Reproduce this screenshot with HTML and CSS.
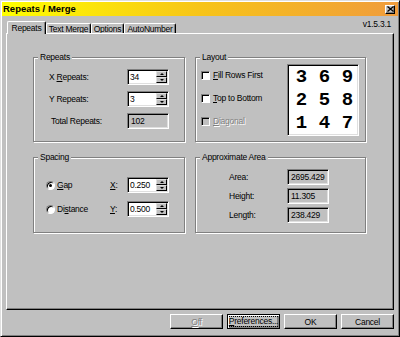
FILE: index.html
```html
<!DOCTYPE html>
<html lang="en">
<head>
  <meta charset="UTF-8">
  <title>Repeats / Merge</title>
  <link rel="stylesheet" href="styles.css">
</head>
<body>

  <div class="window">

    <!-- TITLE BAR -->
    <div class="titlebar">
      <span class="title">Repeats / Merge</span>
      <span class="close-btn">
        <svg width="7" height="6" viewBox="0 0 7 6"><path d="M0.5 0.5L6.5 5.5M6.5 0.5L0.5 5.5" stroke="#000" stroke-width="1.3"/></svg>
      </span>
    </div>

    <div class="body">

      <!-- TABS -->
      <div class="tab-row">
        <div class="tabs">
          <div class="tab active tab-repeats">Repeats</div>
          <div class="tab tab-merge">Text Merge</div>
          <div class="tab tab-options">Options</div>
          <div class="tab tab-auto">AutoNumber</div>
        </div>
        <div class="version">v1.5.3.1</div>
      </div>

      <div class="panel">
        <div class="groups">

          <fieldset class="group">
            <legend>Repeats</legend>
            <div class="group-body repeats-body">
              <div class="field-row">
                <span class="lbl">X <u>R</u>epeats:</span>
                <div class="spin">
                  <span class="spin-value">34</span>
                  <span class="spin-btns"><span class="spin-btn up"></span><span class="spin-btn down"></span></span>
                </div>
              </div>
              <div class="field-row">
                <span class="lbl">Y Repeats:</span>
                <div class="spin">
                  <span class="spin-value">3</span>
                  <span class="spin-btns"><span class="spin-btn up"></span><span class="spin-btn down"></span></span>
                </div>
              </div>
              <div class="field-row total">
                <span class="lbl">Total Repeats:</span>
                <div class="readonly">102</div>
              </div>
            </div>
          </fieldset>

          <fieldset class="group">
            <legend>Layout</legend>
            <div class="group-body layout-body">
              <div class="checks">
                <div class="check-row"><span class="checkbox"></span><span><u>F</u>ill Rows First</span></div>
                <div class="check-row"><span class="checkbox"></span><span><u>T</u>op to Bottom</span></div>
                <div class="check-row disabled"><span class="checkbox"></span><span><u>D</u>iagonal</span></div>
              </div>
              <div class="numbox">
                <span>3</span><span>6</span><span>9</span>
                <span>2</span><span>5</span><span>8</span>
                <span>1</span><span>4</span><span>7</span>
              </div>
            </div>
          </fieldset>

          <fieldset class="group">
            <legend>Spacing</legend>
            <div class="group-body spacing-body">
              <div class="field-row">
                <span class="radio checked"></span>
                <span class="radio-lbl"><u>G</u>ap</span>
                <span class="axis"><u>X</u>:</span>
                <div class="spin">
                  <span class="spin-value">0.250</span>
                  <span class="spin-btns"><span class="spin-btn up"></span><span class="spin-btn down"></span></span>
                </div>
              </div>
              <div class="field-row">
                <span class="radio"></span>
                <span class="radio-lbl">Di<u>s</u>tance</span>
                <span class="axis"><u>Y</u>:</span>
                <div class="spin">
                  <span class="spin-value">0.500</span>
                  <span class="spin-btns"><span class="spin-btn up"></span><span class="spin-btn down"></span></span>
                </div>
              </div>
            </div>
          </fieldset>

          <fieldset class="group">
            <legend>Approximate Area</legend>
            <div class="group-body area-body">
              <div class="field-row">
                <span class="lbl">Area:</span>
                <div class="readonly">2695.429</div>
              </div>
              <div class="field-row">
                <span class="lbl">Height:</span>
                <div class="readonly">11.305</div>
              </div>
              <div class="field-row">
                <span class="lbl">Length:</span>
                <div class="readonly">238.429</div>
              </div>
            </div>
          </fieldset>

        </div>
      </div>

      <!-- BUTTONS -->
      <div class="buttons">
        <div class="btn disabled"><span><u>O</u>ff</span></div>
        <div class="btn default"><span class="focus"><u>P</u>references...</span></div>
        <div class="btn">OK</div>
        <div class="btn">Cancel</div>
      </div>

    </div>
  </div>

</body>
</html>
```

FILE: styles.css
```css
* {
  box-sizing: border-box;
}

body {
  margin: 0;
  background: #c0c0c0;
  font-family: "Liberation Sans", Arial, sans-serif;
  font-size: 8.5px;
  letter-spacing: -0.25px;
  line-height: 10px;
  color: #000;
  white-space: nowrap;
}

u {
  text-underline-offset: 1px;
}

/* WINDOW FRAME */
.window {
  width: 400px;
  height: 337px;
  background: #c0c0c0;
  border: 1px solid;
  border-color: #dfdfdf #000 #000 #dfdfdf;
  box-shadow: inset 1px 1px 0 #fff, inset -1px -1px 0 #808080;
  padding: 1px;
  display: flex;
  flex-direction: column;
}

.titlebar {
  height: 14px;
  display: flex;
  align-items: center;
  justify-content: space-between;
  padding: 0 3px 0 1px;
  background: linear-gradient(90deg, #ffff00, #f7c418 50%, #f09c3c);
}

.title {
  font-weight: bold;
  font-size: 9.5px;
  letter-spacing: 0;
}

.close-btn {
  width: 10px;
  height: 9px;
  display: flex;
  align-items: center;
  justify-content: center;
  background: #c0c0c0;
  border: 1px solid;
  border-color: #fff #000 #000 #fff;
  box-shadow: inset -1px -1px 0 #808080;
}

.body {
  flex: 1;
  display: flex;
  flex-direction: column;
  padding: 5px 4px 0;
}

/* TABS */
.tab-row {
  display: flex;
  justify-content: space-between;
  align-items: flex-end;
  height: 12px;
}

.tabs {
  display: flex;
  align-items: flex-end;
  margin-left: 1px;
}

.tab {
  height: 10px;
  display: flex;
  align-items: center;
  justify-content: center;
  border-top: 1px solid #fff;
  border-left: 1px solid #fff;
  border-right: 1px solid #000;
  box-shadow: inset -1px 0 0 #808080;
  border-radius: 2px 2px 0 0;
}

.tab.active {
  height: 13px;
  margin-bottom: -1px;
  position: relative;
  z-index: 1;
  background: #c0c0c0;
  padding-bottom: 1px;
}

.tab-repeats { width: 39px; }
.tab-merge { width: 45px; }
.tab-options { width: 33px; }
.tab-auto { width: 52px; }

.version {
  align-self: flex-start;
  margin-top: -2px;
  margin-right: 3px;
}

.panel {
  height: 277px;
  border: 1px solid;
  border-color: #fff #000 #000 #fff;
  box-shadow: inset -1px -1px 0 #808080;
  padding: 18px 0 0 26px;
}

.groups {
  display: grid;
  grid-template-columns: 152px 171px;
  grid-template-rows: 90px 81px;
  gap: 10px;
}

/* GROUP BOXES */
.group {
  margin: 0;
  padding: 0;
  min-width: 0;
  border: 1px solid #808080;
  box-shadow: inset 1px 1px 0 #fff, 1px 1px 0 #fff;
}

.group legend {
  margin-left: 4px;
  padding: 0 2px;
  line-height: 10px;
  background: #c0c0c0;
}

.field-row {
  display: flex;
  align-items: center;
  height: 16px;
}

.repeats-body {
  display: flex;
  flex-direction: column;
  gap: 6px;
  padding: 7px 0 0 15px;
}

.repeats-body .lbl {
  width: 78px;
}

.repeats-body .total .lbl {
  padding-left: 2px;
}

.spin,
.readonly {
  width: 42px;
  height: 16px;
  border: 1px solid;
  border-color: #808080 #fff #fff #808080;
  box-shadow: inset 1px 1px 0 #000, inset -1px -1px 0 #dfdfdf;
  padding: 1px;
  display: flex;
}

.spin {
  background: #fff;
}

.readonly {
  align-items: center;
  padding-left: 3px;
}

.spin-value {
  flex: 1;
  padding-left: 1px;
  display: flex;
  align-items: center;
}

.spin-btns {
  width: 11px;
  display: flex;
  flex-direction: column;
}

.spin-btn {
  flex: 1;
  display: flex;
  align-items: center;
  justify-content: center;
  background: #c0c0c0;
  border: 1px solid;
  border-color: #dfdfdf #000 #000 #dfdfdf;
}

.spin-btn::after {
  content: "";
  border-left: 2px solid transparent;
  border-right: 2px solid transparent;
}

.spin-btn.up::after {
  border-bottom: 2px solid #000;
}

.spin-btn.down::after {
  border-top: 2px solid #000;
}

/* LAYOUT */
.layout-body {
  display: flex;
  justify-content: space-between;
  padding: 2px 6px 0 5px;
}

.checks {
  display: flex;
  flex-direction: column;
  gap: 7px;
  margin-top: 3px;
}

.check-row {
  display: flex;
  align-items: center;
  gap: 3px;
  height: 16px;
}

.checkbox {
  width: 9px;
  height: 9px;
  background: #fff;
  border: 1px solid;
  border-color: #808080 #fff #fff #808080;
  box-shadow: inset 1px 1px 0 #000;
}

.check-row.disabled {
  color: #808080;
  text-shadow: 1px 1px 0 #fff;
}

.check-row.disabled .checkbox {
  background: #c0c0c0;
}

.numbox {
  width: 72px;
  height: 72px;
  background: #fff;
  border: 1px solid;
  border-color: #808080 #fff #fff #808080;
  box-shadow: inset 1px 1px 0 #000, inset -1px -1px 0 #dfdfdf;
  padding: 1px 0 0 2px;
  display: grid;
  grid-template-columns: repeat(3, 23px);
  grid-template-rows: repeat(3, 23px);
  align-items: center;
  justify-items: center;
  font-family: "Liberation Mono", "Courier New", monospace;
  font-weight: bold;
  font-size: 19px;
  letter-spacing: 0;
  line-height: 19px;
}

/* SPACING */
.spacing-body {
  display: flex;
  flex-direction: column;
  gap: 8px;
  padding: 15px 0 0 12px;
}

.radio {
  width: 9px;
  height: 9px;
  border-radius: 50%;
  background: #fff;
  border: 1px solid;
  border-color: #808080 #fff #fff #808080;
  box-shadow: inset 1px 1px 0 #000;
  display: flex;
  align-items: center;
  justify-content: center;
  margin-right: 2px;
}

.radio.checked::after {
  content: "";
  width: 3px;
  height: 3px;
  border-radius: 50%;
  background: #000;
}

.radio-lbl {
  width: 53px;
}

.axis {
  width: 17px;
}

/* APPROXIMATE AREA */
.area-body {
  display: flex;
  flex-direction: column;
  gap: 3px;
  padding: 7px 0 0 33px;
}

.area-body .lbl {
  width: 58px;
}

/* BOTTOM BUTTONS */
.buttons {
  display: flex;
  justify-content: flex-end;
  gap: 4px;
  margin-top: 4px;
}

.btn {
  width: 53px;
  height: 15px;
  display: flex;
  align-items: center;
  justify-content: center;
  border: 1px solid;
  border-color: #fff #000 #000 #fff;
  box-shadow: inset -1px -1px 0 #808080;
}

.btn.default {
  border-color: #000;
  box-shadow: inset 1px 1px 0 #fff, inset -2px -2px 0 #808080;
}

.btn .focus {
  border: 1px dotted #000;
  padding: 0 1px;
  line-height: 9px;
}

.btn.disabled {
  color: #808080;
  text-shadow: 1px 1px 0 #fff;
}
```
